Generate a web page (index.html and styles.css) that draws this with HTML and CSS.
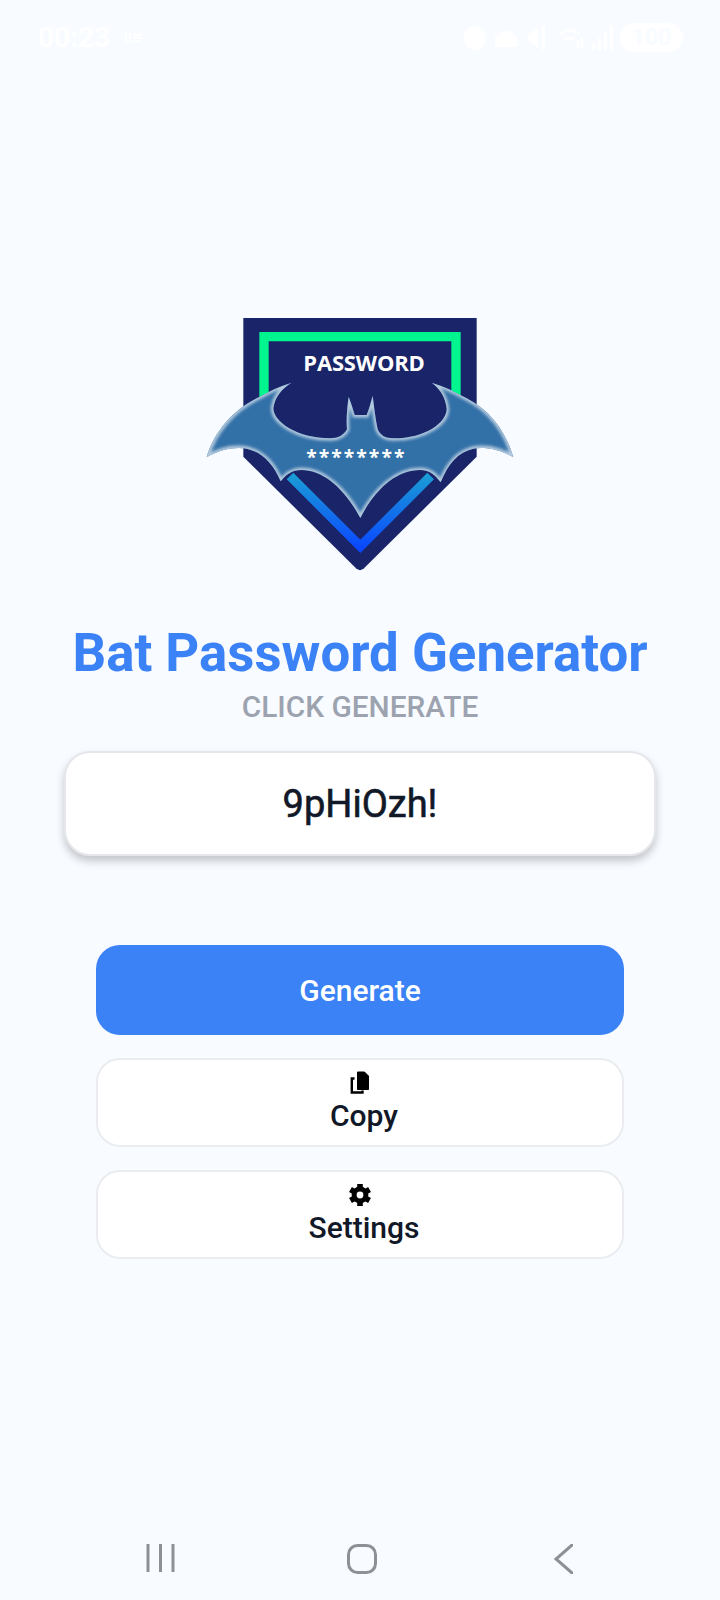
FILE: index.html
```html
<!DOCTYPE html>
<html lang="en">
<head>
<meta charset="utf-8">
<title>Bat Password Generator</title>
<link rel="stylesheet" href="styles.css">
</head>
<body>
<div class="screen">
  <header class="status">
    <div class="status-left">
      <span class="time">00:23</span>
      <svg class="speed" viewBox="0 0 17 10"><path d="M1 0v10M5 0v10M8 2h8M8 5h8M8 8h8"/></svg>
    </div>
    <div class="status-right">
      <svg class="ic-dot" viewBox="0 0 22 24"><ellipse cx="11" cy="12" rx="11" ry="12"/></svg>
      <svg class="ic-car" viewBox="0 0 24 20"><path d="M4 8 7 3h10l3 5h3v11H1V8z"/></svg>
      <svg class="ic-mute" viewBox="0 0 18 24"><path d="M0 9 10 2v20L0 14zM14 0h3v24h-3z"/></svg>
      <svg class="ic-wifi" viewBox="0 0 23 20"><path d="M0 4q10-6 20 0v3q-10-6-20 0zM5 10q5-3 10 0v3q-5-3-10 0zM17 12h2v8h-2zM21 10h2v10h-2z"/></svg>
      <svg class="ic-signal" viewBox="0 0 21 24"><path d="M0 18h3v6H0zM6 12h3v12H6zM12 6h3v18h-3zM18 0h3v24h-3z"/></svg>
      <span class="battery">100</span>
    </div>
  </header>

  <main class="main">
    <svg class="logo" viewBox="0 0 1020 870" role="img" aria-label="Bat Password Generator logo">
      <defs>
        <linearGradient id="chevron" gradientUnits="userSpaceOnUse" x1="0" y1="530" x2="0" y2="745">
          <stop offset="0" stop-color="#1a9ad6"/>
          <stop offset="1" stop-color="#0a48ff"/>
        </linearGradient>
        <filter id="soft" x="-5%" y="-5%" width="110%" height="110%"><feGaussianBlur stdDeviation="5"/></filter>
        <filter id="edge" x="-2%" y="-2%" width="104%" height="104%"><feGaussianBlur stdDeviation="1"/></filter>
        <path id="bat" d="M50 472C72 395 130 330 200 295C235 275 270 258 305 248C275 266 254 292 250 325C250 365 320 415 420 415C445 415 462 405 471 388C468 355 472 320 476 290C484 312 490 330 494 345H530C536 330 542 310 548 287C552 320 556 355 563 388C570 405 585 415 610 415C710 415 772 365 770 325C766 292 752 268 725 248C760 258 795 275 830 295C900 330 948 395 970 472C930 448 885 440 850 446C805 456 775 490 752 547C735 525 720 510 690 510C620 510 555 567 511 654C465 567 400 510 335 510C305 510 288 524 272 544C250 490 215 456 170 446C135 440 90 448 50 472Z"/>
        <clipPath id="batclip"><use href="#bat"/></clipPath>
      </defs>
      <path class="shield" d="M160 54H860V470L522 805Q510 816 498 805L160 470Z"/>
      <path class="frame-top" d="M222 300V110H798V300"/>
      <path class="frame-low" d="M300 528L511 739L722 528"/>
      <text class="logo-word" x="522" y="213" text-anchor="middle">PASSWORD</text>
      <use href="#bat" class="bat-fill" filter="url(#edge)"/>
      <g clip-path="url(#batclip)">
        <use href="#bat" class="bat-glow" filter="url(#soft)"/>
      </g>
      <text class="logo-stars" x="499" y="493" text-anchor="middle">********</text>
    </svg>

    <h1 class="title">Bat Password Generator</h1>
    <p class="hint">CLICK GENERATE</p>

    <div class="card">
      <span class="password">9pHiOzh!</span>
    </div>

    <div class="actions">
      <button class="btn btn-primary" type="button">Generate</button>
      <button class="btn btn-outline" type="button">
        <svg class="btn-icon" viewBox="0 0 24 24">
          <path class="copy-back" d="M6.500 7.500H3.800V21.500H14.500V19.500"/>
          <path class="copy-front" d="M9.500 1H16.500L20.500 5V18.500H9.500Z"/>
        </svg>
        <span class="btn-label">Copy</span>
      </button>
      <button class="btn btn-outline" type="button">
        <svg class="btn-icon" viewBox="0 0 24 24">
          <circle class="gear-ring" cx="12" cy="12" r="8.400"/>
          <g class="gear-teeth">
            <path d="M12 1v22"/>
            <path d="M2.470 6.500l19.060 11"/>
            <path d="M2.470 17.500l19.060-11"/>
          </g>
          <circle class="gear-hole" cx="12" cy="12" r="3.400"/>
        </svg>
        <span class="btn-label">Settings</span>
      </button>
    </div>
  </main>

  <nav class="navbar">
    <svg class="nav-recent" viewBox="0 0 29 28"><path d="M2 0v28M14.500 0v28M27 0v28"/></svg>
    <svg class="nav-home" viewBox="0 0 30 30"><rect x="1.500" y="1.500" width="27" height="27" rx="9"/></svg>
    <svg class="nav-back" viewBox="0 0 19 30"><path d="M18 1 2 15l16 14"/></svg>
  </nav>
</div>
</body>
</html>
```
FILE: styles.css
```css
* { box-sizing: border-box; }
html, body { margin: 0; padding: 0; }
body {
  background: #f8fbff;
  font-family: Roboto, "Liberation Sans", sans-serif;
  color: #111827;
}
.screen {
  width: 720px;
  height: 1600px;
  display: flex;
  flex-direction: column;
  overflow: hidden;
}

/* Status bar */
.status {
  height: 74px;
  flex: none;
  padding: 23px 37px 0 38px;
  display: flex;
  justify-content: space-between;
  align-items: flex-start;
}
.status svg { fill: #fff; display: block; }
.status-left { display: flex; align-items: center; gap: 15px; height: 29px; }
.time { color: #fff; font-size: 28px; font-weight: 700; line-height: 29px; }
.speed { width: 17px; height: 10px; }
.speed path { fill: none; stroke: #fff; stroke-width: 2; }
.status-right { display: flex; align-items: center; height: 29px; }
.ic-dot { width: 22px; height: 24px; margin-right: 8px; }
.ic-car { width: 24px; height: 20px; margin-right: 10px; }
.ic-mute { width: 18px; height: 24px; margin-right: 14px; }
.ic-wifi { width: 23px; height: 20px; margin-right: 9px; }
.ic-signal { width: 21px; height: 24px; margin-right: 7px; }
.battery {
  width: 63px;
  height: 29px;
  border-radius: 15px;
  background: #fff;
  color: #f8fbff;
  font-size: 23px;
  font-weight: 700;
  line-height: 29px;
  text-align: center;
}

/* Main column */
.main {
  flex: 1;
  display: flex;
  flex-direction: column;
  align-items: center;
}
.logo {
  display: block;
  width: 340px;
  height: 290px;
  margin-top: 226px;
  flex: none;
}
.shield { fill: #1a2468; }
.frame-top { fill: none; stroke: #00f58f; stroke-width: 28; }
.frame-low { fill: none; stroke: url(#chevron); stroke-width: 28; }
.logo-word {
  font-family: "Open Sans", sans-serif;
  font-weight: 700;
  font-size: 66px;
  letter-spacing: -0.5px;
  fill: #fff;
}
.bat-fill { fill: #3070a8; }
.bat-glow { fill: none; stroke: #b4c9dd; stroke-width: 15; }
.logo-stars {
  font-family: "Open Sans", sans-serif;
  font-weight: 700;
  font-size: 58px;
  letter-spacing: 6px;
  fill: #fff;
}

.title {
  margin: 31px 0 0;
  font-size: 52.800px;
  line-height: 64px;
  font-weight: 700;
  color: #3b82f6;
  white-space: nowrap;
}
.hint {
  margin: 3px 0 0;
  font-size: 29.800px;
  line-height: 38px;
  font-weight: 500;
  color: #9ca3af;
}
.card {
  width: 592px;
  height: 105px;
  margin-top: 25px;
  background: #fff;
  border: 2px solid #e5e7eb;
  border-radius: 26px;
  box-shadow: 0 5px 9px rgba(0, 0, 0, 0.22);
  display: flex;
  align-items: center;
  justify-content: center;
}
.password { font-size: 38px; font-weight: 400; color: #111827; -webkit-text-stroke: 0.6px #111827; }

.actions {
  width: 528px;
  margin-top: 89px;
  display: flex;
  flex-direction: column;
  gap: 23px;
}
.btn {
  width: 100%;
  height: 89px;
  margin: 0;
  border-radius: 24px;
  font-family: inherit;
  display: flex;
  flex-direction: column;
  align-items: center;
  justify-content: flex-start;
}
.btn-primary {
  height: 90px;
  justify-content: center;
  background: #3b82f6;
  border: 0;
  color: #fff;
  font-size: 30px;
  font-weight: 500;
  padding: 0;
}
.btn-outline {
  background: #fff;
  border: 2px solid #eaecf0;
  padding: 11px 0 0;
}
.btn-icon { display: block; width: 24px; height: 24px; flex: none; }
.copy-back { fill: none; stroke: #000; stroke-width: 2.400; }
.copy-front { fill: #000; stroke: #000; stroke-width: 1; stroke-linejoin: round; }
.gear-ring { fill: #000; }
.gear-teeth path { fill: none; stroke: #000; stroke-width: 5.600; }
.gear-hole { fill: #fff; }
.btn-label {
  padding: 1px 0 0 8px;
  font-size: 30px;
  line-height: 40px;
  font-weight: 500;
  color: #111827;
}

/* Navigation bar */
.navbar {
  flex: none;
  height: 56px;
  padding: 0 56px 28px 60px;
  display: grid;
  grid-template-columns: 1fr 1fr 1fr;
  align-items: start;
  justify-items: center;
}
.navbar svg { display: block; fill: none; stroke: #8e9096; stroke-width: 3; }
.nav-recent { width: 29px; height: 28px; stroke-linecap: round; }
.nav-home { width: 30px; height: 30px; }
.nav-back { width: 19px; height: 30px; stroke-linecap: round; }
```
